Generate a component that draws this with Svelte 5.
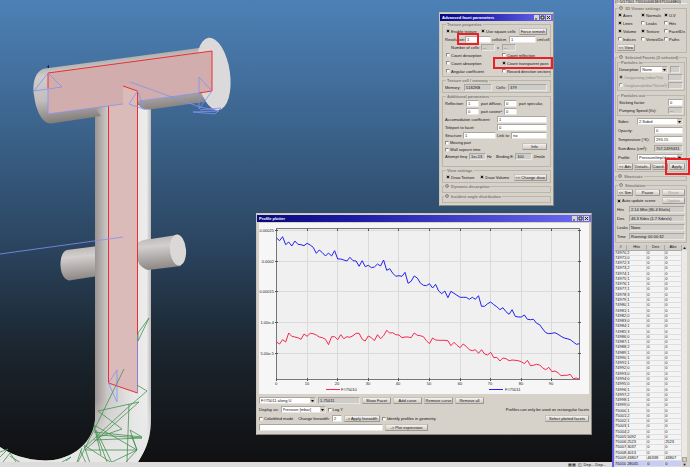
<script>
  const blue = [
    84, 92, 80, 104, 96, 108, 93, 103, 104, 107, 100, 105, 112, 130, 120, 128, 138, 129, 138, 122,
    147, 147, 150, 153, 142, 152, 153, 169, 152, 170, 166, 173, 171, 162, 168, 150, 181, 176, 190, 199,
    197, 199, 187, 220, 214, 198, 204, 219, 226, 227, 221, 234, 223, 243, 251, 243, 263, 244, 250, 256,
    262, 262, 262, 268, 262, 268, 257, 289, 289, 281, 276, 284, 290, 299, 293, 305, 313, 299, 319, 321,
    321, 315, 328, 329, 328, 340, 344, 357, 368, 371, 370, 368, 373, 379, 384, 386, 389, 396, 403, 401
  ];
  const red = [
    66, 72, 59, 66, 39, 49, 51, 53, 58, 42, 49, 40, 41, 45, 51, 53, 58, 74, 50, 50,
    59, 44, 56, 50, 52, 47, 40, 40, 58, 63, 48, 53, 62, 44, 56, 47, 31, 39, 38, 44,
    45, 53, 51, 51, 53, 39, 46, 47, 50, 62, 71, 54, 60, 61, 61, 61, 62, 77, 67, 76,
    83, 72, 79, 89, 92, 89, 100, 89, 102, 105, 97, 113, 112, 123, 114, 116, 122, 120, 121, 122,
    125, 131, 121, 137, 136, 133, 135, 144, 149, 142, 155, 153, 158, 167, 166, 166, 163, 176, 174, 178
  ];

  function points(values, offset) {
    return values.map((v, i) => `${(17.5 + i * 3.06).toFixed(1)},${(offset + v / 3).toFixed(1)}`).join(' ');
  }

  const yTicks = ['0.00025', '0.0002', '0.00015', '1.00e-4', '5.00e-5'];
  const xTicks = [0, 10, 20, 30, 40, 50, 60, 70, 80, 90];

  const viewer = [
    ['Axes', true], ['Normals', true], ['U,V', true],
    ['Lines', true], ['Leaks', false], ['Hits', false],
    ['Volume', true], ['Texture', true], ['FacetIDs', false],
    ['Indices', false], ['VertexIDs', false], ['Paths', false]
  ];

  const counters = [
    ['Count desorption', false], ['Count reflection', false],
    ['Count absorption', false], ['Count transparent pass', true],
    ['Angular coefficient', false], ['Record direction vectors', false]
  ];

  const hits = [
    2, 0, 3, 2, 1, 1, 1, 1, 3, 1, 1, 1, 0, 0, 1, 3, 0, 1, 2, 1, 1,
    1, 0, 0, 0, 0, 1, 2, 1, 0, 1, 2, 1, 1, 2, 5092, 2523, 3037, 4013, 43807, 28045
  ];
  const desorbed = { 75009: 46338 };
  const absorbed = { 75006: 2523, 75009: 43807 };
  const rows = hits.map((h, i) => {
    const id = 74970 + i;
    return { id, hits: h, des: desorbed[id] ?? 0, abs: absorbed[id] ?? 0 };
  });

  const status = [
    ['Hits', '2.14 Mhit (80.4 Khit/s)'],
    ['Des.', '46.3 Kdes (1.7 Kdes/s)'],
    ['Leaks', 'None'],
    ['Time', 'Running: 00:00:32']
  ];
</script>

{#snippet check(label, checked)}
  <label class="check"><input type="checkbox" {checked} />{label}</label>
{/snippet}

{#snippet caption()}
  <span class="caption">
    <button aria-label="Minimize"><svg viewBox="0 0 5 5"><path d="M1 4h2" /></svg></button>
    <button aria-label="Maximize"><svg viewBox="0 0 5 5"><path d="M1 1h3v3h-3z" /></svg></button>
    <button aria-label="Close"><svg viewBox="0 0 5 5"><path d="M1 1l3 3M4 1l-3 3" /></svg></button>
  </span>
{/snippet}

<div class="app">
  <main class="desk">
    <div class="scene">
      <svg viewBox="0 0 612 462" preserveAspectRatio="xMinYMin slice" role="img" aria-label="Geometry view">
        <defs>
          <linearGradient id="pipe" gradientUnits="userSpaceOnUse" x1="95" y1="0" x2="151" y2="0">
            <stop offset="0" stop-color="#9a9391" />
            <stop offset="0.22" stop-color="#cbc8c6" />
            <stop offset="0.7" stop-color="#e8e7e7" />
            <stop offset="0.92" stop-color="#ececec" />
            <stop offset="1" stop-color="#bcb8b7" />
          </linearGradient>
          <linearGradient id="bend" x1="0" y1="0" x2="0" y2="1">
            <stop offset="0" stop-color="#e8e7e7" stop-opacity="0" />
            <stop offset="0.8" stop-color="#e8e7e7" />
          </linearGradient>
          <linearGradient id="tube" gradientUnits="userSpaceOnUse" x1="110" y1="56" x2="117" y2="116">
            <stop offset="0" stop-color="#aaa5a3" />
            <stop offset="0.2" stop-color="#cfcccb" />
            <stop offset="0.6" stop-color="#c2bebd" />
            <stop offset="1" stop-color="#827c79" />
          </linearGradient>
          <linearGradient id="stub" x1="0" y1="0" x2="0.1" y2="1">
            <stop offset="0" stop-color="#b5b0ae" />
            <stop offset="0.35" stop-color="#d2cfce" />
            <stop offset="1" stop-color="#8e8886" />
          </linearGradient>
        </defs>
        <path d="M98 246L67 250C58 252 58 279 69 280.500L98 276z" fill="url(#stub)" />
        <path d="M95 105V420C92 449 64 461 45 460.500C25 460 10 454 0 447V462H138C147 448 151 436 151 418V105z" fill="url(#pipe)" />
        <path d="M95 400V420C92 449 64 461 45 460.500C25 460 10 454 0 447V462H138C147 448 151 436 151 418V400z" fill="url(#bend)" />
        <path d="M199 48L45 68.500C36 70 32 82 34 95C36 112 43 124 51 123.500L101 116C98 112 96 110 95 108L108 106V104L137 101C139 107 142 110 150 109.500L204 102z" fill="url(#tube)" />
        <path d="M151 239L177 235L181 266L148 270C142 268 138 264 138 260V243C141 240 147 239 151 239z" fill="url(#stub)" />
        <ellipse cx="178" cy="250" rx="8" ry="15.500" transform="rotate(-5 178 250)" fill="#dbd8d8" />
        <ellipse cx="213.500" cy="74" rx="16.500" ry="36.500" transform="rotate(-8 213.500 74)" fill="#dbd9da" />
        <path d="M48 73L212 51V91L138 101.500V393L108.500 383V106L48 114z" fill="#d2adad" />
        <path d="M108.500 106L123 104V86L137.500 91V393L108.500 383z" fill="#dbbaba" />
        <g fill="none" stroke="#f02c30">
          <path d="M48 88V73L212 51V91L199 93M123 86L137.500 91V393L108.500 383V106" />
        </g>
        <g fill="none" stroke="#8292f2" stroke-width="0.800">
          <path d="M48 88V114L123 104M139 101L199 93" />
          <path d="M48 73L34 91L62 87zM137.500 91L129 104L145 109.500zM199 77L212 91L199 109z" />
          <path d="M130 82L200 107L219 111L193 112L215 114L221 108L200 110M0 254L123 237" />
          <path d="M108.500 383L117 370V402zM137.500 335V393" />
        </g>
        <g fill="none" stroke="#459050" stroke-width="0.800">
          <path d="M149 318L138 333L138 341L149 318M124 369L95 428L78 462M137 385L147 391L125 410L84 448M98 411L139 402L85 450L137 450L126 462M98 411L122 429L96 438M129 404L127 462M94 425L137 450L130 430L142 437L94 432M94 425L101 455M95 430L107 462M99 435L142 438L94 440M84 445L112 463L96 430M84 446L90 463M82 448L77 462M80 450L86 463M110 463L137 450L131 435M0 452L8 449L0 457M3 462L10 453L16 462M10 456L21 463M66 461L71 457L62 462" />
        </g>
        <path d="M47 67l2 -2v3z" fill="#111" />
      </svg>
    </div>

    <section class="window advanced">
      <h2>Advanced facet parameters {@render caption()}</h2>
      <fieldset>
        <legend>Texture properties</legend>
        <div class="row">
          {@render check('Enable texture', true)}
          {@render check('Use square cells', true)}
          <button class="end">Force remesh</button>
        </div>
        <div class="row resolution">
          <label for="res">Resolution:</label><input id="res" value="1" />
          <label for="cell">cells/cm</label><input id="cell" value="1" /><span>cm/cell</span>
        </div>
        <div class="row cells">
          <label for="nx">Number of cells:</label><input id="nx" value="..." disabled />
          <label for="ny">x</label><input id="ny" value="..." disabled />
        </div>
        <div class="counters">
          {#each counters as [label, on]}
            {@render check(label, on)}
          {/each}
        </div>
        <span class="mark resolution-mark"></span>
        <span class="mark pass-mark"></span>
      </fieldset>
      <fieldset>
        <legend>Texture cell / memory</legend>
        <div class="row memory">
          <label for="mem">Memory:</label><input id="mem" value="5182KB" disabled />
          <label for="cnt">Cells:</label><input id="cnt" value="379" disabled />
        </div>
      </fieldset>
      <fieldset class="additional">
        <legend>Additional parameters</legend>
        <div class="row reflect">
          <label for="diff">Reflection:</label><input id="diff" value="1" />
          <label for="spec">part diffuse,</label><input id="spec" value="0" /><span>part specular,</span>
        </div>
        <div class="row reflect">
          <span></span><input aria-label="Cosine part" value="0" />
          <label for="cos">part cosine^</label><input id="cos" value="0" />
        </div>
        <div class="row wide"><label for="acc">Accomodation coefficient:</label><input id="acc" value="1" /></div>
        <div class="row wide"><label for="tel">Teleport to facet:</label><input id="tel" value="0" /></div>
        <div class="row struct">
          <label for="str">Structure:</label><input id="str" value="1" />
          <label for="link">Link to:</label><input id="link" value="no" />
        </div>
        <div class="sojourn">
          <div>
            {@render check('Moving part', false)}
            {@render check('Wall sojourn time', false)}
          </div>
          <button>Info</button>
        </div>
        <div class="row freq">
          <label for="att">Attempt freq:</label><input id="att" value="1e+13" disabled /><span>Hz</span>
          <label for="bind">Binding E:</label><input id="bind" value="100" disabled /><span>J/mole</span>
        </div>
      </fieldset>
      <fieldset>
        <legend>View settings</legend>
        <div class="row">
          {@render check('Draw Texture', true)}
          {@render check('Draw Volume', true)}
          <button class="end change">&lt;&lt; Change draw</button>
        </div>
      </fieldset>
      <fieldset class="closed"><legend><i>v</i>Dynamic desorption</legend></fieldset>
      <fieldset class="closed"><legend><i>v</i>Incident angle distribution</legend></fieldset>
    </section>

    <section class="window plotter">
      <h2>Profile plotter {@render caption()}</h2>
      <svg class="chart" viewBox="0 0 330 171" role="img" aria-label="Profile chart">
        <rect x="17.500" y="5.500" width="303" height="151" fill="#f0f0f0" />
        <g stroke="#dadada">
          {#each yTicks as _, i}
            <path d="M17.500 {Math.round(i * 30.7) + 7.5}h303" />
          {/each}
          {#each xTicks as _, i}
            <path d="M{Math.round(i * 30.6) + 17.5} 5.500v151" />
          {/each}
        </g>
        <rect x="17.500" y="5.500" width="303" height="151" fill="none" stroke="#777" />
        <g stroke="#555">
          {#each yTicks as _, i}
            <path d="M16 {Math.round(i * 30.7) + 7.5}h3M319 {Math.round(i * 30.7) + 7.5}h3" />
          {/each}
          {#each xTicks as _, i}
            <path d="M{Math.round(i * 30.6) + 17.5} 155v3m0 -152v2" />
          {/each}
        </g>
        {#each yTicks as tick, i}
          <text x="15" y={Math.round(i * 30.7) + 9} text-anchor="end">{tick}</text>
        {/each}
        {#each xTicks as tick, i}
          <text x={Math.round(i * 30.6) + 17} y="162" text-anchor="middle">{tick}</text>
        {/each}
        <polyline points={points(blue, -13)} fill="none" stroke="#2222ee" />
        <polyline points={points(red, 97)} fill="none" stroke="#f5284c" />
        <path d="M67 166.500h14" stroke="#f5284c" />
        <text x="82" y="168">F#75010</text>
        <path d="M230 166.500h14" stroke="#2222ee" />
        <text x="246" y="168">F#75011</text>
      </svg>
      <div class="row tools">
        <select class="curve" aria-label="Curve"><option>F#75011 along U</option></select>
        <input class="facet" aria-label="Facet" value="1-75011" disabled />
        <button>Show Facet</button><button>Add curve</button><button>Remove curve</button><button>Remove all</button>
      </div>
      <div class="row">
        <label for="disp">Display as:</label>
        <select id="disp" class="display"><option>Pressure [mbar]</option></select>
        {@render check('Log Y', false)}
        <span class="end">Profiles can only be used on rectangular facets</span>
      </div>
      <div class="row linewidth">
        {@render check('Colorblind mode', false)}
        <label for="lw">Change linewidth:</label><input id="lw" value="2" />
        <button>-&gt; Apply linewidth</button>
        {@render check('Identify profiles in geometry', false)}
        <button class="end">Select plotted facets</button>
      </div>
      <div class="row">
        <input class="expression" aria-label="Expression" />
        <button class="plot">-&gt; Plot expression</button>
      </div>
    </section>
  </main>

  <footer class="bar"><span>▦▦</span><span>◱</span><span>Dep... Dep...</span></footer>

  <aside class="panel">
    <p class="coords">(#:5/17301 73/0104461E3751046E0)</p>
    <fieldset>
      <legend><i>^</i>3D Viewer settings</legend>
      <div class="viewer">
        {#each viewer as [label, on]}
          {@render check(label, on)}
        {/each}
      </div>
      <div class="row"><button class="view">&lt;&lt; View</button></div>
    </fieldset>

    <fieldset class="selected">
      <legend><i>^</i>Selected Facets (2 selected)</legend>
      <fieldset>
        <legend>Particles in</legend>
        <div class="row desorb">
          <label for="des">Desorption</label>
          <select id="des"><option>None</option></select>
          <input aria-label="Exponent" disabled />
        </div>
        <div class="row gas">
          <label class="check"><input type="radio" name="gas" checked disabled />Outgassing (mbar*l/s):</label>
          <input aria-label="Outgassing" disabled />
        </div>
        <div class="row gas">
          <label class="check"><input type="radio" name="gas" disabled />Outg/area(mbar*l/s/cm²):</label>
          <input aria-label="Outgassing per area" disabled />
        </div>
      </fieldset>
      <fieldset class="out">
        <legend>Particles out</legend>
        <div class="row gas"><label for="stick">Sticking factor:</label><input id="stick" value="0" /></div>
        <div class="row gas"><label for="pump">Pumping Speed (l/s):</label><input id="pump" value="..." disabled /></div>
      </fieldset>
      <div class="row prop sides"><label for="sides">Sides:</label><select id="sides"><option>2 Sided</option></select></div>
      <div class="row prop"><label for="opac">Opacity:</label><input id="opac" value="0" /></div>
      <div class="row prop"><label for="temp">Temperature (°K):</label><input id="temp" value="293.15" /></div>
      <div class="row prop"><label for="area">Sum Area (cm²):</label><input id="area" value="707.2499431" disabled /></div>
      <div class="row prop sides"><label for="prof">Profile:</label><select id="prof"><option>Pressure/imp/density (U)</option></select></div>
      <div class="row actions">
        <button>&lt;&lt; Adv</button><button>Details...</button><button>Coord...</button><button>Apply</button>
        <span class="mark apply-mark"></span>
      </div>
    </fieldset>

    <fieldset class="closed"><legend><i>v</i>Shortcuts</legend></fieldset>

    <fieldset class="simulation">
      <legend><i>^</i>Simulation</legend>
      <div class="row sim"><button>&lt;&lt; Sim</button><button>Pause</button><button disabled>Reset</button></div>
      <div class="row sim update">{@render check('Auto update scene', true)}<button disabled>Update</button></div>
      {#each status as [label, value]}
        <div class="row stat"><label for={label}>{label}</label><input id={label} {value} disabled /></div>
      {/each}
    </fieldset>

    <div class="list">
      <table>
        <thead>
          <tr><th>#</th><th>Hits</th><th>Des</th><th>Abs</th></tr>
        </thead>
        <tbody>
          {#each rows as row}
            <tr class:current={row.id === 75010}>
              <td>{row.id}</td><td>{row.hits}</td><td>{row.des}</td><td>{row.abs}</td>
            </tr>
          {/each}
        </tbody>
      </table>
      <div class="scroll"><i>▲</i><b></b><i>▼</i></div>
    </div>
  </aside>
</div>

<style>
  :global(body) {
    margin: 0;
    background: #111;
  }

  .app {
    display: grid;
    grid-template-columns: 1fr 78px;
    grid-template-rows: 1fr 5px;
    height: 100vh;
    overflow: hidden;
    font: 4px/5px "Liberation Sans", Arial, sans-serif;
    color: #111;
  }

  .app * {
    box-sizing: border-box;
  }

  .desk {
    position: relative;
    overflow: hidden;
    background: linear-gradient(#4d81b6, #3d6690 25%, #2c4662 52%, #1b262f 75%, #101011);
  }

  .scene,
  .scene svg {
    display: block;
    width: 100%;
    height: 100%;
  }

  .window {
    position: absolute;
    display: flex;
    flex-direction: column;
    padding: 1px 2px 2px;
    background: #d6d2ca;
    border: 1px solid #c9c5bd;
    border-right-color: #8b8780;
    border-bottom-color: #8b8780;
  }

  .advanced {
    left: 439px;
    top: 12px;
    width: 115px;
    gap: 1px;
    padding-bottom: 2px;
  }

  .plotter {
    left: 256px;
    top: 213px;
    width: 336px;
  }

  h2 {
    display: flex;
    justify-content: space-between;
    align-items: center;
    height: 7px;
    margin: 0 -2px;
    padding: 0 2px;
    font-size: 4px;
    line-height: 6px;
    color: #fff;
    background: linear-gradient(90deg, #08087c, #1c1ca4 30%, #6c6cf4);
  }

  .plotter h2 {
    margin-bottom: 1px;
  }

  .caption {
    display: flex;
    gap: 1px;
  }

  .caption button {
    display: block;
    width: 5px;
    height: 5px;
    padding: 0;
    border: 0;
    border-radius: 0;
    background: #d8d4cc;
  }

  .caption svg {
    display: block;
    fill: none;
    stroke: #222;
  }

  fieldset {
    position: relative;
    min-width: 0;
    margin: 0;
    padding: 0 3px 1px;
    border: 1px solid #bab6ae;
  }

  .advanced fieldset {
    padding-left: 2px;
  }

  legend {
    margin-left: 1px;
    padding: 0 1px;
    font-weight: bold;
    height: 5px;
    white-space: nowrap;
    color: #7d7a76;
  }

  legend i {
    display: inline-block;
    width: 4px;
    height: 4px;
    margin-right: 2px;
    border: 1px solid #8e8a85;
    border-radius: 2px;
    font-size: 3px;
    line-height: 2px;
    text-align: center;
    vertical-align: top;
  }

  .advanced .closed {
    height: 9px;
    padding: 0;
  }

  .advanced .additional {
    padding-bottom: 6px;
  }

  .row {
    display: flex;
    align-items: center;
    gap: 2px;
    height: 8px;
    white-space: nowrap;
  }

  .end {
    margin-left: auto;
  }

  label,
  span {
    white-space: nowrap;
  }

  .check {
    display: flex;
    align-items: center;
    gap: 1px;
  }

  input,
  select,
  button {
    min-width: 0;
    height: 7px;
    margin: 0;
    padding: 0 1px;
    font: inherit;
    color: #111;
    border: 1px solid #aaa69f;
    border-right-color: #e8e6e0;
    border-bottom-color: #e8e6e0;
    border-radius: 0;
    background: #fff;
    appearance: none;
  }

  input:disabled {
    background: #cfcdc9;
  }

  button {
    padding: 0;
    text-align: center;
    white-space: nowrap;
    background: linear-gradient(#f4f3f0, #cdc9c2);
    border: 1px solid #9c9891;
    border-top-color: #c6c2bb;
    border-left-color: #c6c2bb;
    border-radius: 1px;
  }

  button:disabled {
    color: #9b9893;
  }

  select {
    background: url("data:image/svg+xml,%3Csvg xmlns='http://www.w3.org/2000/svg' viewBox='0 0 5 5'%3E%3Cpath d='M0 0h5v5h-5z' fill='%23d0ccc5'/%3E%3Cpath d='M1 2h3l-1.500 2z'/%3E%3C/svg%3E") right center / 5px 5px no-repeat #fff;
  }

  .check input {
    flex: none;
    width: 4px;
    height: 4px;
    padding: 0;
    border-top-color: #8d8983;
    border-left-color: #8d8983;
    background: #fff;
  }

  .check input:checked {
    background: #222;
    border-color: #bbb8b2;
  }

  .check input[type="radio"] {
    border-radius: 2px;
  }

  .advanced .row > .check {
    width: 33px;
    padding-left: 1px;
  }

  .advanced .row > button {
    width: 28px;
  }

  .resolution {
    display: grid;
    grid-template-columns: 19px 26px 16px 27px 14px;
    gap: 1px;
  }

  .cells {
    display: grid;
    grid-template-columns: 28px 14px 3px 14px;
    gap: 2px;
    padding-left: 6px;
  }

  .counters {
    display: grid;
    grid-template-columns: 56px 1fr;
    grid-auto-rows: 8px;
    padding-left: 1px;
  }

  .memory {
    display: grid;
    grid-template-columns: 17px 28px 12px 1fr;
  }

  .memory label:nth-of-type(2) {
    text-align: right;
  }

  .reflect {
    display: grid;
    grid-template-columns: 19px 13px 21px 13px 1fr;
  }

  .wide {
    display: grid;
    grid-template-columns: 51px 1fr;
    gap: 1px;
  }

  .struct {
    display: grid;
    grid-template-columns: 17px 33px 13px 1fr;
    gap: 1px;
  }

  .sojourn {
    display: flex;
    justify-content: space-between;
    align-items: center;
  }

  .sojourn .check {
    height: 7px;
  }

  .sojourn button {
    width: 25px;
  }

  .freq {
    gap: 1px;
    height: 7px;
  }

  .freq input {
    width: 17px;
  }

  .freq span {
    width: 8px;
  }

  .advanced .row > .change {
    width: 34px;
  }

  .mark {
    position: absolute;
    border: 2px solid #ec1f24;
    pointer-events: none;
  }

  .resolution-mark {
    left: 14px;
    top: 6px;
    width: 22px;
    height: 12px;
  }

  .pass-mark {
    left: 50px;
    top: 30px;
    width: 60px;
    height: 12px;
  }

  .chart {
    display: block;
    width: 100%;
    margin-bottom: 2px;
    background: #f6f6f6;
  }

  .chart text {
    font-size: 4px;
    fill: #222;
  }

  .plotter .row {
    height: 9px;
    gap: 2px;
  }

  .tools button {
    width: 29px;
  }

  .curve {
    width: 57px;
  }

  .facet {
    width: 42px;
  }

  .display {
    width: 45px;
  }

  .linewidth input:not([type="checkbox"]) {
    width: 10px;
  }

  .linewidth button {
    width: 36px;
  }

  .linewidth .end {
    width: 44px;
  }

  .linewidth > label:nth-of-type(2) {
    margin-left: 3px;
  }

  .expression {
    width: 124px;
  }

  .plot {
    width: 43px;
  }

  .bar {
    grid-row: 2;
    display: flex;
    justify-content: flex-end;
    gap: 2px;
    padding-right: 6px;
    background: #dddcdb;
  }

  .panel {
    grid-column: 2;
    grid-row: 1 / 3;
    min-height: 0;
    display: flex;
    flex-direction: column;
    gap: 2px;
    padding: 0 3px 0 1px;
    background: #d6d2ca;
    border-left: 2px solid #6262ec;
  }

  .coords {
    height: 4px;
    margin: 0;
    line-height: 4px;
    white-space: nowrap;
    border-bottom: 1px solid #eee;
  }

  .panel fieldset {
    padding: 0 1px 1px;
  }

  .viewer {
    display: grid;
    grid-template-columns: 23px 23px 1fr;
    grid-auto-rows: 8px;
    padding-left: 1px;
  }

  .view {
    width: 18px;
  }

  .panel .closed {
    height: 7px;
    padding: 0;
  }

  .panel .out {
    margin: 2px 0 1px;
  }

  .desorb select {
    width: 28px;
  }

  .desorb input {
    width: 10px;
  }

  .gas {
    justify-content: space-between;
    gap: 0;
  }

  .gas .check {
    color: #8a8782;
  }

  .gas > input {
    width: 15px;
    flex: none;
  }

  .prop {
    display: grid;
    grid-template-columns: 35px 1fr;
    height: 9px;
    gap: 1px;
    padding: 0 2px 0 1px;
  }

  .sides {
    grid-template-columns: 18px 1fr;
  }

  .actions {
    position: relative;
    gap: 1px;
  }

  .actions button {
    flex: 1;
  }

  .apply-mark {
    right: -5px;
    top: -4px;
    width: 25px;
    height: 17px;
  }

  .sim {
    display: grid;
    grid-template-columns: 16px 1fr 23px;
  }

  .update {
    grid-template-columns: 1fr 23px;
    height: 9px;
  }

  .stat {
    display: grid;
    grid-template-columns: 11px 1fr;
    height: 9px;
    gap: 1px;
  }

  .list {
    flex: 1;
    min-height: 0;
    display: flex;
  }

  table {
    flex: 1;
    height: 100%;
    table-layout: fixed;
    border-collapse: collapse;
    background: #f4f4f4;
  }

  th,
  td {
    height: 5px;
    padding: 0;
    overflow: hidden;
    line-height: 4px;
    border-right: 1px solid #d8d8d8;
    border-bottom: 1px solid #dedede;
    text-align: left;
  }

  th {
    font-weight: normal;
    text-align: center;
    background: #cfccc6;
    border-color: #aaa;
  }

  th:first-child {
    width: 11px;
  }

  th:nth-child(2) {
    width: 20px;
  }

  th:nth-child(3) {
    width: 18px;
  }

  .current td {
    background: #c9ccf6;
  }

  .scroll {
    display: flex;
    flex-direction: column;
    justify-content: space-between;
    width: 5px;
    background: #ece9e4;
    text-align: center;
  }

  .scroll i {
    height: 5px;
    font-style: normal;
    background: #d0ccc5;
  }

  .scroll b {
    height: 5px;
    margin-top: auto;
    background: #d0ccc5;
    border: 1px solid #aaa69f;
  }
</style>
